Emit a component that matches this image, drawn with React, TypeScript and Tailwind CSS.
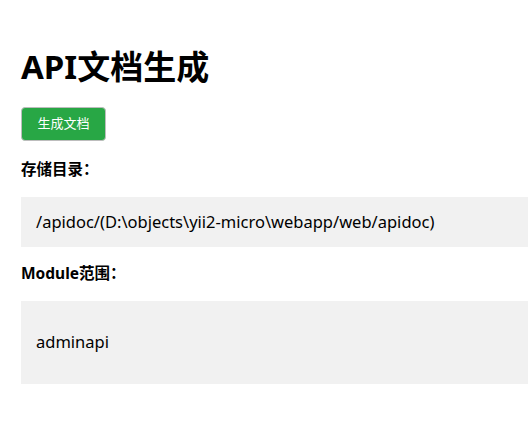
import React from "react";

const font = { fontFamily: '"Noto Sans", "Noto Sans CJK SC", sans-serif' };

export default function App() {
  return (
    <div className="min-h-screen bg-white text-black pl-[21px] pt-[44px]" style={font}>
      <h1 className="text-[33px] font-bold leading-[46px]">API文档生成</h1>
      <button className="mt-[17px] h-[34px] w-[85px] rounded-[4px] border border-[#bdbdbd] bg-[#28a745] text-[13px] text-white">
        生成文档
      </button>
      <div className="mt-[17px] text-[15.5px] font-bold leading-[22px]">存储目录：</div>
      <div className="mt-[17px] flex h-[50px] items-center bg-[#f1f1f1] pl-[15px] text-[16.5px]">
        /apidoc/(D:\objects\yii2-micro\webapp/web/apidoc)
      </div>
      <div className="mt-[15px] text-[15.5px] font-bold leading-[22px]">Module范围：</div>
      <div className="mt-[17px] flex h-[83px] items-center bg-[#f1f1f1] pl-[15px] text-[16.5px]">
        adminapi
      </div>
    </div>
  );
}
